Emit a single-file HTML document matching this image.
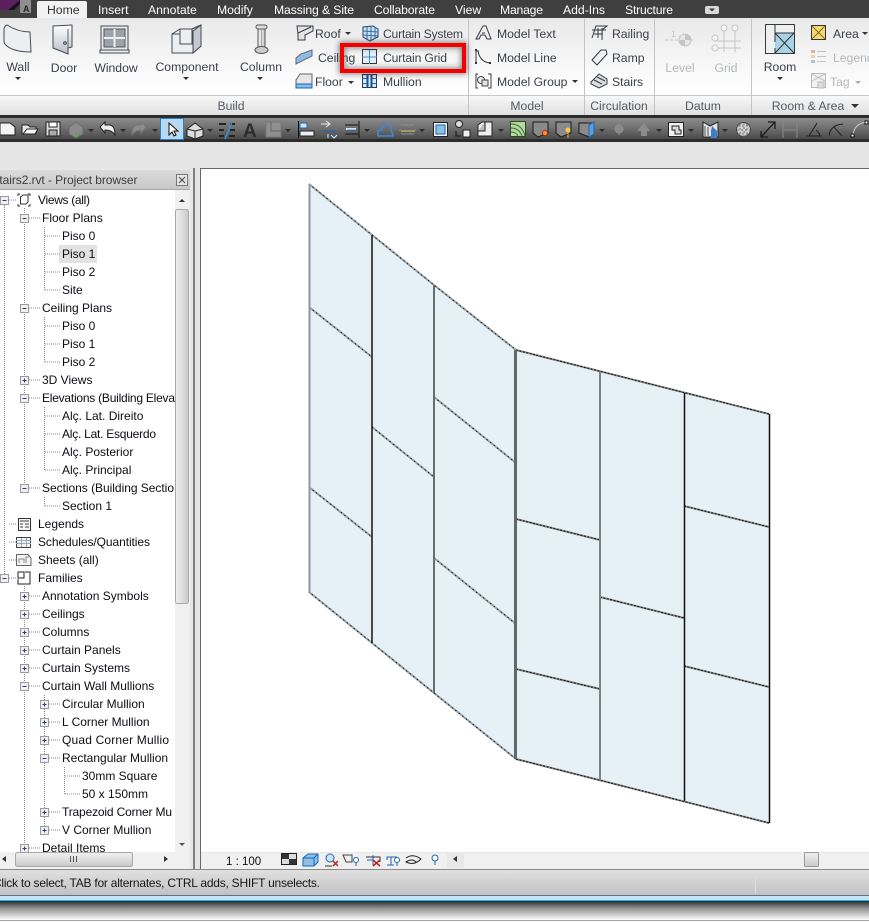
<!DOCTYPE html>
<html><head><meta charset="utf-8"><title>Curtain Grid</title>
<style>
html,body{margin:0;padding:0;width:869px;height:923px;overflow:hidden;background:#e4e4e4}
svg{display:block;font-family:"Liberation Sans",sans-serif;font-size:12px}
.tab{fill:#fff;font-size:12.2px}
.r{fill:#3a4048;font-size:12.2px}
.g{fill:#b4b8bc;font-size:12.2px}
.m{text-anchor:middle}
.t{fill:#0c0c14;font-size:12px}
.l{fill:#555b62;font-size:12.2px}
.dot{stroke:#888;stroke-width:1;stroke-dasharray:1 1;fill:none}
.pn{fill:#e5f0f7;stroke:none}
.o{stroke:#98a2a7;stroke-width:2;fill:none}
.od{stroke:#111;stroke-width:.9;stroke-dasharray:1.500 3;fill:none}
.odr{stroke:#111;stroke-width:1;stroke-dasharray:2 1.500;fill:none}
</style></head><body>
<svg width="869" height="923" viewBox="0 0 869 923" xmlns="http://www.w3.org/2000/svg">
<defs>
<linearGradient id="rib" x1="0" y1="0" x2="0" y2="1"><stop offset="0" stop-color="#e9e9e9"/><stop offset=".55" stop-color="#f6f6f6"/><stop offset="1" stop-color="#fff"/></linearGradient>
<linearGradient id="lab" x1="0" y1="0" x2="0" y2="1"><stop offset="0" stop-color="#f8f8f8"/><stop offset="1" stop-color="#e0e0e0"/></linearGradient>
<linearGradient id="tb" x1="0" y1="0" x2="0" y2="1"><stop offset="0" stop-color="#8c8c8c"/><stop offset=".5" stop-color="#6e6e6e"/><stop offset="1" stop-color="#4a4a4a"/></linearGradient>
<linearGradient id="st" x1="0" y1="0" x2="0" y2="1"><stop offset="0" stop-color="#e0e0e0"/><stop offset="1" stop-color="#c2c2c2"/></linearGradient>
<linearGradient id="sh" x1="0" y1="0" x2="0" y2="1"><stop offset="0" stop-color="#2a2a2a"/><stop offset=".35" stop-color="#8a8a8a"/><stop offset="1" stop-color="#fff"/></linearGradient>
<linearGradient id="tt" x1="0" y1="0" x2="0" y2="1"><stop offset="0" stop-color="#dcdcdc"/><stop offset="1" stop-color="#c8c8c8"/></linearGradient>
<linearGradient id="sc" x1="0" y1="0" x2="1" y2="0"><stop offset="0" stop-color="#f0f0f0"/><stop offset=".5" stop-color="#dedede"/><stop offset="1" stop-color="#c8c8c8"/></linearGradient>
<linearGradient id="sch" x1="0" y1="0" x2="0" y2="1"><stop offset="0" stop-color="#f0f0f0"/><stop offset=".5" stop-color="#dedede"/><stop offset="1" stop-color="#c8c8c8"/></linearGradient>
<linearGradient id="ig" x1="0" y1="0" x2="0" y2="1"><stop offset="0" stop-color="#fff"/><stop offset="1" stop-color="#b8bec6"/></linearGradient>
<filter id="blur" x="-20%" y="-60%" width="140%" height="220%"><feGaussianBlur stdDeviation="3"/></filter>
<g id="plus"><rect x="-4" y="-4" width="8" height="8" fill="#f0f0f0" stroke="#9a9a9a"/><path d="M-2 0H2M0-2V2" stroke="#2a3f7a"/></g>
<g id="minus"><rect x="-4" y="-4" width="8" height="8" fill="#f0f0f0" stroke="#9a9a9a"/><path d="M-2 0H2" stroke="#2a3f7a"/></g>
<path id="ar" d="M-3 0H3L0 3Z" fill="#333"/>
<path id="arw" d="M-3 0H3L0 3Z" fill="#2a2a2a"/>
</defs>

<!-- tab bar -->
<rect x="0" y="0" width="869" height="18" fill="#3f3f3f"/>
<path d="M0 0H20L8 10H0Z" fill="#5c1f5e"/>
<path d="M20 0L8 10H14L24 0Z" fill="#1d1020"/>
<rect x="20" y="0" width="11" height="13" fill="#8f8f8f"/>
<text x="23" y="12" font-size="9" font-weight="bold" fill="#222">A</text>
<path d="M37 18V3Q37 1 39 1H85Q87 1 87 3V18Z" fill="#f2f2f2"/>
<text x="47" y="14" font-size="12.2" fill="#333">Home</text>
<text x="98" y="14" class="tab">Insert</text>
<text x="148" y="14" class="tab">Annotate</text>
<text x="217" y="14" class="tab">Modify</text>
<text x="274" y="14" class="tab" textLength="80">Massing &amp; Site</text>
<text x="374" y="14" class="tab" textLength="61">Collaborate</text>
<text x="455" y="14" class="tab">View</text>
<text x="500" y="14" class="tab" textLength="43">Manage</text>
<text x="563" y="14" class="tab" textLength="42">Add-Ins</text>
<text x="625" y="14" class="tab" textLength="48">Structure</text>
<rect x="705" y="6" width="14" height="8" rx="2" fill="#d8d8d8"/><path d="M709 8.500H715L712 11.500Z" fill="#333"/>

<!-- ribbon -->
<rect x="0" y="18" width="869" height="77" fill="url(#rib)"/>
<rect x="0" y="95" width="869" height="1" fill="#c8c8c8"/>
<rect x="0" y="96" width="869" height="19" fill="url(#lab)"/>
<path d="M468.500 19V115M584.500 19V115M654.500 19V115M751.500 19V115" stroke="#c4c4c4"/>
<text x="231" y="110" class="l m">Build</text>
<text x="527" y="110" class="l m">Model</text>
<text x="619" y="110" class="l m">Circulation</text>
<text x="703" y="110" class="l m">Datum</text>
<text x="808" y="110" class="l m">Room &amp; Area</text>
<path d="M851 104H859L855 108Z" fill="#333"/>

<!-- Wall -->
<path d="M4 30Q4 26 7 25Q18 32 30 32L31 52Q14 52 7 46Q4 44 4 41Z" fill="#eceef2" stroke="#444b55"/>
<text x="18" y="71" class="r m">Wall</text><use href="#ar" x="18" y="77"/>
<!-- Door -->
<path d="M53 26L72 25V47L68 48V54L53 48Z" fill="url(#ig)" stroke="#444b55"/>
<path d="M68 29V48" stroke="#666" fill="none"/><circle cx="65" cy="43" r="1.300" fill="#fff" stroke="#333"/>
<text x="64" y="72" class="r m">Door</text>
<!-- Window -->
<rect x="101" y="26" width="27" height="24" fill="#e9e9e9" stroke="#444b55"/>
<rect x="104" y="29" width="21" height="18" fill="#9aa2ae" stroke="#555"/>
<path d="M114.500 29V47M104 38H125" stroke="#eee" stroke-width="2"/>
<rect x="100" y="50" width="29" height="3" fill="#eee" stroke="#444b55"/>
<text x="116" y="72" class="r m">Window</text>
<!-- Component -->
<path d="M172 34L180 29H192L201 25V46L193 53H172Z" fill="#eceef0" stroke="#444b55"/>
<path d="M172 34H180V44H192V29M180 29V34M192 29L201 25M180 44H193V53" fill="none" stroke="#444b55"/>
<path d="M193 53V31L201 25V46Z" fill="#c4c8d0" stroke="#444b55"/>
<text x="187" y="71" class="r m">Component</text><use href="#ar" x="186" y="77"/>
<!-- Column -->
<rect x="256" y="25" width="11" height="4" rx="2" fill="#ddd" stroke="#555"/>
<rect x="258" y="29" width="7" height="18" fill="url(#sc)" stroke="#555"/>
<path d="M261.500 30V46" stroke="#aaa"/>
<ellipse cx="261.500" cy="50" rx="6.500" ry="3.500" fill="#ccc" stroke="#555"/>
<text x="261" y="71" class="r m">Column</text><use href="#ar" x="260" y="77"/>

<!-- Roof/Ceiling/Floor -->
<path d="M297 26H313V31L305 35V40H298V34Z" fill="#e4e4e4" stroke="#333a44"/><path d="M298 33L311 27" stroke="#333a44"/>
<text x="315" y="38" class="r">Roof</text><use href="#ar" x="348" y="32"/>
<path d="M301 54L312 50V56L296 64V58Z" fill="#8cbce4" stroke="#667"/>
<text x="318" y="62" class="r">Ceiling</text>
<path d="M296 84V80L300 74H312V84Z" fill="#e6e6e6" stroke="#666"/><path d="M296 84H312V88H296Z" fill="#8cbce4" stroke="#1a66b8"/>
<text x="315" y="86" class="r">Floor</text><use href="#ar" x="351" y="81"/>

<!-- Curtain system etc -->
<path d="M363 27L373 26L378 29V37L370 41L363 37Z" fill="#cfe0ee" stroke="#2a3f66"/>
<path d="M367 27V40M371 27V41M375 27V39M363 31L378 32M363 35L378 36" stroke="#2c6ea8" fill="none"/>
<text x="383" y="38" class="r" textLength="80">Curtain System</text>
<rect x="362.500" y="49.500" width="14" height="14" fill="#e5eef5" stroke="#2f3a48"/>
<path d="M362 57H377M369.500 50V64" stroke="#3a8cdc"/>
<text x="383" y="62" class="r" textLength="64">Curtain Grid</text>
<rect x="362.500" y="74.500" width="14" height="13" fill="#d8e8f4" stroke="#2f3a48"/>
<path d="M367.500 74V88M371.500 74V88" stroke="#13528e" stroke-width="2"/><path d="M362 78.500H367M362 83.500H367M372 78.500H377M372 83.500H377" stroke="#1a66b8"/>
<text x="383" y="86" class="r">Mullion</text>

<!-- red highlight -->
<rect x="342" y="45" width="122" height="26" fill="none" stroke="#222" stroke-width="6" opacity=".55" filter="url(#blur)"/>
<rect x="342" y="45" width="122" height="26" fill="none" stroke="#f40000" stroke-width="4"/>

<!-- model -->
<path d="M476 39L483 26H486L491 39H487L485 35H481L479 39Z" fill="#eee" stroke="#333a44"/><path d="M482 33H485" stroke="#333a44"/>
<text x="497" y="38" class="r">Model Text</text>
<path d="M476 51V63M476 51H479M478 51Q480 62 490 63" fill="none" stroke="#333a44"/><rect x="475" y="49" width="2" height="2" fill="#333"/><rect x="475" y="62" width="2" height="2" fill="#333"/><rect x="489" y="62" width="2" height="2" fill="#333"/>
<text x="497" y="62" class="r">Model Line</text>
<path d="M478 74H476V88H478M488 74H491V88H488" fill="none" stroke="#333a44"/><circle cx="481" cy="80" r="3.500" fill="#eee" stroke="#444"/><rect x="482" y="80" width="6" height="6" fill="#e4e4e4" stroke="#444"/>
<text x="497" y="86" class="r">Model Group</text><use href="#ar" x="575" y="80"/>

<!-- circulation -->
<path d="M592 38L596 26H607L602 30V40M592 30H606M598 28V38M602 28V38M594 34H603" fill="none" stroke="#333a44"/>
<text x="612" y="38" class="r">Railing</text>
<path d="M592 60L601 50H606L607 54L597 65Z" fill="#f0f0f0" stroke="#333a44"/>
<text x="612" y="62" class="r">Ramp</text>
<path d="M591 82L599 74L607 79V84L599 88L591 84Z" fill="#ddd" stroke="#333a44"/><path d="M594 80L602 84M597 77L605 81" stroke="#333a44"/>
<text x="612" y="86" class="r">Stairs</text>

<!-- datum (disabled) -->
<path d="M665 40H678M690 40H695" stroke="#c4c4c4" stroke-dasharray="3 2"/><text x="671" y="37" font-size="9" fill="#c4c4c4">1</text>
<circle cx="685" cy="40" r="6" fill="#e6e6e6" stroke="#c6c6c6"/><path d="M685 40V34A6 6 0 0 1 691 40ZM685 40V46A6 6 0 0 1 679 40Z" fill="#c4c4c4"/>
<text x="680" y="72" class="g m">Level</text>
<path d="M724 31V52M735 31V52M714 41H741M714 48H741" stroke="#c6c6c6" fill="none"/>
<circle cx="724" cy="28" r="3" fill="#f4f4f4" stroke="#c6c6c6"/><circle cx="735" cy="28" r="3" fill="#f4f4f4" stroke="#c6c6c6"/><circle cx="715" cy="38" r="3" fill="#f4f4f4" stroke="#c6c6c6"/><circle cx="715" cy="48" r="3" fill="#f4f4f4" stroke="#c6c6c6"/>
<text x="726" y="72" class="g m">Grid</text>

<!-- room -->
<rect x="765.500" y="24.500" width="29" height="29" fill="#eef0f2" stroke="#3a3a3a"/>
<rect x="775" y="33" width="19" height="20" fill="#a8d2e8"/>
<path d="M775 33L794 53M794 33L775 53M775 33H794M775 24V42M775 48V53" stroke="#333" fill="none"/>
<text x="780" y="71" class="r m">Room</text><use href="#ar" x="780" y="77"/>
<rect x="811.500" y="25.500" width="14" height="14" fill="#f4d878" stroke="#333"/><path d="M812 26L825 39M825 26L812 39" stroke="#8a6a10"/>
<text x="833" y="38" class="r">Area</text><use href="#ar" x="865" y="32"/>
<rect x="811" y="50" width="4" height="3" fill="#e0b0a8"/><rect x="811" y="55" width="4" height="3" fill="#e8d4a0"/><rect x="811" y="60" width="4" height="3" fill="#a8c4e0"/>
<path d="M817 51.500H826M817 56.500H826M817 61.500H826" stroke="#c4c4c4"/>
<text x="833" y="62" class="g">Legend</text>
<rect x="811.500" y="73.500" width="14" height="14" fill="#f2f2f2" stroke="#bbb"/><path d="M812 74L825 81M825 74L812 81" stroke="#c4c4c4"/><rect x="818" y="82" width="6" height="6" fill="#ddd" stroke="#bbb"/>
<text x="830" y="86" class="g">Tag</text><path d="M855 81H861L858 84Z" fill="#aaa"/>

<!-- toolbar -->
<rect x="0" y="115" width="869" height="27" fill="#2c2c2c"/>
<rect x="0" y="118" width="869" height="21" fill="url(#tb)"/>
<rect x="0" y="142" width="869" height="26" fill="#e4e4e4"/>
<path d="M0 123H10L15 127V135H0Z" fill="#f4f4f4" stroke="#222"/>
<path d="M22 134V125H28L30 127H36V134Z" fill="#e8e8e8" stroke="#222"/><path d="M23 134L27 129H38L35 134Z" fill="#f8f8f8" stroke="#222"/>
<path d="M46 122H60V136H46Z" fill="#ddd" stroke="#222"/><rect x="49" y="122" width="8" height="5" fill="#fff" stroke="#222"/><rect x="49" y="130" width="8" height="6" fill="#aaa" stroke="#222"/>
<path d="M69 127L76 122L83 127V134L76 138L69 134Z" fill="#8a8a8a" stroke="#6a6a6a"/><path d="M75 134Q80 136 82 131" fill="none" stroke="#4aa848"/>
<path d="M100 127L105 122V125H110Q115 126 115 135Q112 130 105 130V133Z" fill="#eee" stroke="#222"/>
<path d="M146 127L141 122V125H137Q132 126 132 135Q135 130 141 130V133Z" fill="#8c8c8c" stroke="#777"/>
<use href="#arw" x="91" y="129"/><use href="#arw" x="123" y="129"/><use href="#arw" x="155" y="129"/>
<rect x="160.500" y="118.500" width="23" height="21" fill="#b9d8f2" stroke="#2a7fd0"/>
<path d="M169 123V135L172 132L174 136L176 135L174 131H178Z" fill="#fff" stroke="#111"/>
<path d="M187 129L195 123L203 129V136L195 139L187 136Z" fill="#ddd" stroke="#222"/><path d="M195 131V139M187 129L195 131L203 129" stroke="#222" fill="none"/>
<use href="#arw" x="210" y="129"/>
<path d="M219 124H226M219 130H224M219 136H224M230 124H235M230 130H235M229 136H235" stroke="#222" stroke-width="2"/><path d="M232 122L225 139" stroke="#3a8cdc" stroke-width="1.500"/>
<text x="243" y="137" font-size="19" font-weight="bold" fill="#2c2c2c">A</text>
<rect x="266" y="122" width="15" height="15" fill="#8f8f8f" stroke="#777"/><path d="M271 122V131H281" stroke="#666" fill="none"/>
<use href="#arw" x="288" y="129"/>
<path d="M298.500 121V138" stroke="#111"/><rect x="300" y="123" width="7" height="5" fill="#cfe4f6" stroke="#1a66b8"/><rect x="300" y="131" width="14" height="5" fill="#eee" stroke="#222"/>
<path d="M321 124H330M326 121L330 124L326 127M322 131H334V138M331 135L334 138L337 135M328 134V138" fill="none" stroke="#eee"/><path d="M322 131H334V137" stroke="#1a66b8" fill="none"/>
<path d="M345 125H358M345 134H358M359 121V138" stroke="#111"/><path d="M346 129H356" stroke="#cfe4f6" stroke-width="2"/><path d="M347 130H358" stroke="#1a66b8" opacity=".6"/>
<use href="#arw" x="367" y="129"/>
<path d="M378 136V130H382Q382 124 387 124Q391 124 391 129L393 136Z" fill="none" stroke="#3a8cdc" stroke-width="1.500"/>
<path d="M401 125H414M401 134H414M400 129V131M415 129V131" stroke="#8f8f8f"/><rect x="401" y="130" width="14" height="2" fill="#a69868"/>
<use href="#arw" x="422" y="129"/>
<rect x="433.500" y="122.500" width="14" height="14" fill="#f4f4f4" stroke="#222"/><rect x="436" y="125" width="9" height="9" fill="#8cc0e6" stroke="#1a66b8"/>
<circle cx="459" cy="124" r="3.500" fill="#ddd" stroke="#222"/><rect x="463" y="130" width="7" height="7" fill="#f0f0f0" stroke="#222"/><path d="M456 131V136H461" stroke="#111" fill="none"/>
<path d="M478 125L482 122H492V136H478Z" fill="#eee" stroke="#222"/><path d="M485 122V131H478" stroke="#222" fill="#bbb"/>
<use href="#arw" x="501" y="129"/>
<rect x="510.500" y="121.500" width="15" height="15" fill="#b7d7a0" stroke="#2c4a22"/><path d="M511 124Q522 124 525 136M511 128Q519 128 522 136M511 132Q516 132 518 136" fill="none" stroke="#3c7030"/>
<path d="M533 122H548V133L538 137L533 133Z" fill="#8a8a8a" stroke="#1c1c1c"/><circle cx="545" cy="133" r="2.500" fill="#f0a020" stroke="#c02020"/>
<path d="M556 122H571V133L561 137L556 133Z" fill="#8a8a8a" stroke="#1c1c1c"/><circle cx="568" cy="130" r="2.500" fill="#f8c840"/><path d="M568 133V138" stroke="#f0a020"/>
<path d="M579 123H594V134L589 137L579 133Z" fill="#8a8a8a" stroke="#1c1c1c"/><path d="M589 125L594 122V134L589 137Z" fill="#5aa0e0" stroke="#1a66b8"/>
<use href="#arw" x="602" y="129"/>
<circle cx="619" cy="129" r="4.500" fill="#8a8a8a"/><path d="M614 129H624M619 123V135" stroke="#8a8a8a"/>
<path d="M637 131L644 123L650 131H647V136H641V131Z" fill="#8c8c8c"/>
<use href="#arw" x="659" y="129"/>
<rect x="668.500" y="122.500" width="15" height="14" fill="#f2f2f2" stroke="#222"/><path d="M672 126H679V130H681V134H675V130H672Z" fill="#ddd" stroke="#222"/>
<use href="#arw" x="691" y="129"/>
<path d="M703 122L710 126L718 122V137H703Z" fill="#e4e4e4" stroke="#222"/><path d="M712 126L717 131V138H711V131Z" fill="#3a80c8"/><path d="M705 126V136M708 127V136" stroke="#555"/>
<use href="#arw" x="725" y="129"/>
<circle cx="743.500" cy="129.500" r="7" fill="#cfcfcf" stroke="#444"/><path d="M738 126H749M737 130H750M738 134H749M740 124V136M744 123V137M747 124V136" stroke="#777" stroke-dasharray="2 2"/>
<path d="M761 137L774 123M768 122H775V129M761 131V137H768" stroke="#1c1c1c" stroke-width="1.300" fill="none"/>
<path d="M783 122V138M797 122V138M783 130H797" stroke="#888" fill="none"/>
<path d="M806 136H822M809 136L817 123M816 130Q819 132 820 136" stroke="#222" fill="none"/>
<path d="M829 136Q830 125 843 124M834 127L842 136" stroke="#222" fill="none"/>
<path d="M853 135Q854 124 866 122" stroke="#ccc" fill="none"/><rect x="851" y="134" width="3" height="3" fill="#fff" stroke="#111"/><rect x="865" y="121" width="3" height="3" fill="#fff" stroke="#111"/>

<!-- browser panel -->
<rect x="0" y="168" width="193" height="702" fill="#e6e6e6"/>
<rect x="0" y="170" width="190" height="19" fill="url(#tt)"/>
<text x="-6.500" y="184" fill="#3c3c3c" font-size="12" textLength="144">stairs2.rvt - Project browser</text>
<rect x="176.500" y="174.500" width="11" height="11" fill="#e6e6e6" stroke="#777"/><path d="M179 177L185 183M185 177L179 183" stroke="#444"/>
<rect x="0" y="190" width="175" height="662" fill="#fff"/>
<rect x="0" y="189" width="190" height="1" fill="#a8a8a8"/>
<rect x="59" y="245" width="38" height="18" fill="#e2e2e2"/>

<!-- scrollbars -->
<rect x="175" y="190" width="15" height="662" fill="#f0f0f0"/>
<path d="M179 202H185L182 199Z" fill="#333"/>
<rect x="175.500" y="209.500" width="13" height="394" rx="2" fill="url(#sc)" stroke="#a8a8a8"/>
<path d="M179 843H185L182 846Z" fill="#555"/>
<rect x="0" y="852" width="190" height="17" fill="#f0f0f0"/>
<path d="M6 856V862L2 859Z" fill="#333"/>
<rect x="15.500" y="852.500" width="117" height="14" rx="2" fill="url(#sch)" stroke="#a8a8a8"/>
<path d="M70.500 856V862M73.500 856V862M76.500 856V862" stroke="#555"/>
<path d="M164 856V862L168 859Z" fill="#333"/>

<!-- tree lines -->
<path class="dot" d="M4.500 205V578M24.500 208V488M24.500 586V850M44.500 227V290M44.500 317V362M44.500 407V470M44.500 497V506M44.500 695V830M64.500 767V794"/>
<path class="dot" d="M9 200H16M9 524H16M9 542H16M9 560H16M9 578H16M29 218H41M29 308H41M29 380H41M29 398H41M29 488H41M29 596H41M29 614H41M29 632H41M29 650H41M29 668H41M29 686H41M29 848H41M45 236H60M45 254H60M45 272H60M45 290H60M45 326H60M45 344H60M45 362H60M45 416H60M45 434H60M45 452H60M45 470H60M45 506H60M49 704H60M49 722H60M49 740H60M49 758H60M49 812H60M49 830H60M65 776H80M65 794H80"/>
<use href="#minus" x="4.500" y="200.500"/>
<use href="#minus" x="24.500" y="218.500"/><use href="#minus" x="24.500" y="308.500"/><use href="#plus" x="24.500" y="380.500"/><use href="#minus" x="24.500" y="398.500"/><use href="#minus" x="24.500" y="488.500"/>
<use href="#minus" x="4.500" y="578.500"/>
<use href="#plus" x="24.500" y="596.500"/><use href="#plus" x="24.500" y="614.500"/><use href="#plus" x="24.500" y="632.500"/><use href="#plus" x="24.500" y="650.500"/><use href="#plus" x="24.500" y="668.500"/><use href="#minus" x="24.500" y="686.500"/><use href="#plus" x="24.500" y="848.500"/>
<use href="#plus" x="44.500" y="704.500"/><use href="#plus" x="44.500" y="722.500"/><use href="#plus" x="44.500" y="740.500"/><use href="#minus" x="44.500" y="758.500"/><use href="#plus" x="44.500" y="812.500"/><use href="#plus" x="44.500" y="830.500"/>

<!-- tree icons -->
<path d="M20 194H18V196M28 194H30V196M18 204V206H20M30 204V206H28" stroke="#333" fill="none"/><path d="M20.500 197L23 195H28V202L26 204H20.500Z" fill="#fff" stroke="#333"/>
<rect x="18.500" y="518.500" width="12" height="12" fill="#f4f4f4" stroke="#333"/><path d="M20 521H29M20 524H23M25 524H29M20 527H23M25 527H29" stroke="#444"/>
<rect x="16.500" y="537.500" width="14" height="10" fill="#f4f4f4" stroke="#444"/><path d="M16 540.500H31M16 543.500H31M21.500 538V547M26.500 538V547" stroke="#9ab"/>
<path d="M16.500 554.500H28L31 558V565.500H16.500Z" fill="#f4f4f4" stroke="#666"/><path d="M19 563V559H24V563M26 563V557H29" stroke="#888" fill="none"/>
<path d="M18 572H24V578H18ZM25 572H30V584H18V579" fill="#fff" stroke="#222"/>

<!-- tree text -->
<text x="38" y="204" class="t" textLength="52">Views (all)</text>
<text x="42" y="222" class="t">Floor Plans</text>
<text x="62" y="240" class="t">Piso 0</text>
<text x="62" y="258" class="t">Piso 1</text>
<text x="62" y="276" class="t">Piso 2</text>
<text x="62" y="294" class="t">Site</text>
<text x="42" y="312" class="t">Ceiling Plans</text>
<text x="62" y="330" class="t">Piso 0</text>
<text x="62" y="348" class="t">Piso 1</text>
<text x="62" y="366" class="t">Piso 2</text>
<text x="42" y="384" class="t">3D Views</text>
<text x="42" y="402" class="t" textLength="133">Elevations (Building Eleva</text>
<text x="42" y="492" class="t" textLength="132">Sections (Building Sectio</text>
<text x="62" y="744" class="t" textLength="107">Quad Corner Mullio</text>
<text x="62" y="816" class="t" textLength="110">Trapezoid Corner Mu</text>
<svg x="0" y="0" width="175" height="852"><text x="42" y="852" class="t">Detail Items</text></svg>
<text x="62" y="420" class="t">Alç. Lat. Direito</text>
<text x="62" y="438" class="t" textLength="94">Alç. Lat. Esquerdo</text>
<text x="62" y="456" class="t">Alç. Posterior</text>
<text x="62" y="474" class="t">Alç. Principal</text>
<text x="62" y="510" class="t">Section 1</text>
<text x="38" y="528" class="t">Legends</text>
<text x="38" y="546" class="t" textLength="112">Schedules/Quantities</text>
<text x="38" y="564" class="t">Sheets (all)</text>
<text x="38" y="582" class="t">Families</text>
<text x="42" y="600" class="t">Annotation Symbols</text>
<text x="42" y="618" class="t">Ceilings</text>
<text x="42" y="636" class="t">Columns</text>
<text x="42" y="654" class="t">Curtain Panels</text>
<text x="42" y="672" class="t">Curtain Systems</text>
<text x="42" y="690" class="t">Curtain Wall Mullions</text>
<text x="62" y="708" class="t">Circular Mullion</text>
<text x="62" y="726" class="t">L Corner Mullion</text>
<text x="62" y="762" class="t">Rectangular Mullion</text>
<text x="82" y="780" class="t">30mm Square</text>
<text x="82" y="798" class="t">50 x 150mm</text>
<text x="62" y="834" class="t">V Corner Mullion</text>

<!-- splitters -->
<rect x="193" y="168" width="2" height="702" fill="#808080"/>
<rect x="200" y="168" width="1" height="702" fill="#666"/>
<rect x="200" y="168" width="669" height="1" fill="#666"/>

<!-- canvas -->
<rect x="201" y="169" width="668" height="683" fill="#fff"/>
<polygon class="pn" points="309,184 434,285 516,350 769,414 769,823 516,759 434,693 309,592"/>
<path class="o" d="M309 184L434 285L516 350M516 759L434 693L309 592"/>
<path class="od" d="M309 184L434 285L516 350M516 759L434 693L309 592"/>
<path d="M516 350L769 414M516 759L769 823" stroke="#888" stroke-width="2" fill="none"/>
<path class="odr" d="M516 350L769 414M516 759L769 823"/>
<path class="o" d="M309 307L372 357M309 487L372 537M372 427L434 477M434 397L516 463M434 558L516 624"/>
<path class="od" d="M309 307L372 357M309 487L372 537M372 427L434 477M434 397L516 463M434 558L516 624"/>
<path d="M516 519L600 540M516 669L600 689M600 597L684 618M684 506L769 527M684 666L769 687" stroke="#888" stroke-width="2" fill="none"/>
<path class="odr" d="M516 519L600 540M516 669L600 689M600 597L684 618M684 506L769 527M684 666L769 687"/>
<path d="M309.500 184V592" stroke="#8d979c" stroke-width="2"/>
<path d="M372 235V643" stroke="#111" stroke-width="1.500"/>
<path d="M434 285V693" stroke="#666e72" stroke-width="2"/>
<path d="M515.500 350V759" stroke="#5f686d" stroke-width="3"/>
<path d="M600 372V780" stroke="#7b868b" stroke-width="2"/>
<path d="M684.500 393V801" stroke="#111" stroke-width="1.500"/>
<path d="M769.500 414V823" stroke="#111" stroke-width="1.500"/>

<!-- view bar -->
<rect x="201" y="852" width="668" height="17" fill="#f0f0f0"/>
<rect x="201" y="852" width="668" height="1" fill="#e6e6e6"/>
<text x="226" y="865" font-size="11.500" fill="#111">1 : 100</text>
<rect x="281.500" y="853.500" width="15" height="11" fill="#ddd" stroke="#222"/><path d="M282 854H289V859H282ZM289 859H296V864H289Z" fill="#333"/>
<path d="M303 866V858L308 854H318V862L314 866Z" fill="#8cc0e6" stroke="#1a66b8"/><path d="M303 858H314V866M314 858L318 854" stroke="#1a66b8" fill="none"/>
<circle cx="330" cy="858" r="4" fill="#cfe4f6" stroke="#1a66b8"/><path d="M325 866H332" stroke="#333"/><path d="M333 861L338 866M338 861L333 866" stroke="#c02020" stroke-width="1.500"/>
<path d="M343 855H352V862H346Z" fill="#eee" stroke="#444"/><circle cx="356" cy="860" r="2.500" fill="#fff" stroke="#1a66b8"/><path d="M356 863V866" stroke="#1a66b8"/>
<path d="M367 860H373M373 855V865" stroke="#1a66b8" fill="none"/><path d="M366 857H380V862" stroke="#333" fill="none"/><path d="M373 860L380 866M380 860L373 866" stroke="#c02020" stroke-width="1.500"/>
<path d="M387 860V857H397M391 857V865M387 865H394" stroke="#1a66b8" fill="none"/><circle cx="397" cy="860" r="2.500" fill="#fff" stroke="#1a66b8"/><path d="M397 863V866" stroke="#1a66b8"/>
<path d="M406 858Q413 853 421 859Q414 866 406 862Q412 858 416 862" fill="none" stroke="#222"/>
<circle cx="435" cy="858" r="3" fill="#fff" stroke="#1a66b8"/><path d="M435 861V865" stroke="#1a66b8"/>
<rect x="447" y="852" width="17" height="16" fill="#e8e8e8"/>
<path d="M457 856V862L453 859Z" fill="#333"/>
<rect x="804.500" y="852.500" width="14" height="14" rx="1" fill="url(#sch)" stroke="#999"/>

<!-- status -->
<rect x="0" y="869" width="869" height="1" fill="#8a8a8a"/>
<rect x="0" y="870" width="869" height="25" fill="url(#st)"/>
<rect x="755" y="871" width="1" height="23" fill="#dcdcdc"/>
<text x="-7" y="887" fill="#1a1414" font-size="12" textLength="327">Click to select, TAB for alternates, CTRL adds, SHIFT unselects.</text>
<rect x="0" y="895" width="869" height="1" fill="#667080"/>
<rect x="0" y="896" width="869" height="4" fill="#c4e6f8"/>
<rect x="0" y="900" width="869" height="1" fill="#20b4f0"/>
<rect x="0" y="901" width="869" height="19" fill="url(#sh)"/>
<rect x="0" y="920" width="869" height="1" fill="#a4a4a4"/>
<rect x="0" y="921" width="869" height="2" fill="#fff"/>
</svg>
</body></html>
